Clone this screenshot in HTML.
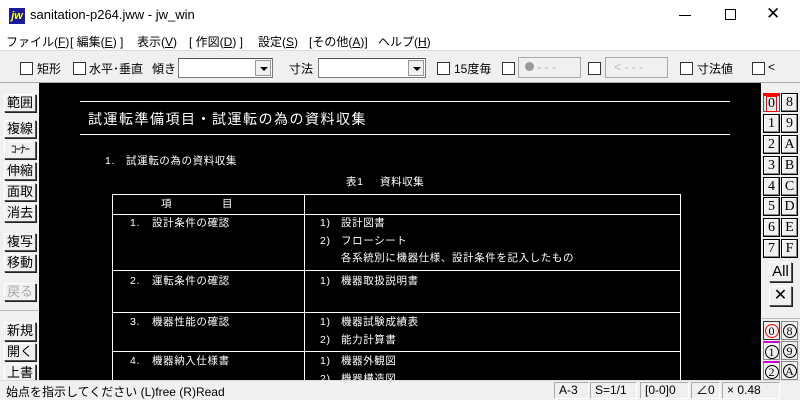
<!DOCTYPE html>
<html><head><meta charset="utf-8"><style>
*{margin:0;padding:0;box-sizing:border-box}
body{width:800px;height:400px;overflow:hidden;background:#f0f0f0;font-family:"Liberation Sans","Noto Sans CJK JP",sans-serif;position:relative;font-size:12px;color:#000}
.a{position:absolute;white-space:nowrap}
#title{left:0;top:0;width:800px;height:30px;background:#fff}
#menu{left:0;top:30px;width:800px;height:20px;background:#fff}
.cb{position:absolute;width:13px;height:13px;background:#fff;border:1px solid #333}
.dd{position:absolute;height:20px;background:#fff;border:1px solid #7a7a7a;border-top-color:#555}
.dd i{position:absolute;right:1px;top:1px;width:16px;height:16px;background:#f0f0f0;border:1px solid #999}
.dd i:after{content:"";position:absolute;left:4px;top:6px;border-left:4px solid transparent;border-right:4px solid transparent;border-top:4px solid #000}
.btn{position:absolute;background:#f0f0f0;border:1px solid;border-color:#fff #555 #555 #fff;box-shadow:1px 1px 0 #222;font-size:13px;text-align:center;line-height:16px}
#canvas{left:39px;top:83px;width:722px;height:297px;background:#000;overflow:hidden}
.w{position:absolute;color:#fff;font-size:10.5px;letter-spacing:0.6px;white-space:nowrap;line-height:12px}
.hl{position:absolute;background:#fff;height:1px}
.vl{position:absolute;background:#fff;width:1px}
.rb{position:absolute;width:17px;height:19px;background:#f0f0f0;border:1px solid #000;box-shadow:inset -1px -1px 0 #888,inset 1px 1px 0 #fff;font-family:"Liberation Serif","Noto Serif CJK SC",serif;font-size:14px;text-align:center;line-height:17px}
.cir{position:absolute;width:17px;height:19px;background:#f0f0f0;border:1px solid #888;font-size:14px;text-align:center;line-height:17px;font-family:"Liberation Serif",serif}
.cir span{display:inline-block;width:14px;height:14px;border:1px solid #000;border-radius:50%;line-height:12px;font-size:12px;margin-top:2px}
#status{left:0;top:380px;width:800px;height:20px;background:#f0f0f0;border-top:1px solid #ddd}
.sb{position:absolute;top:382px;height:17px;border:1px solid;border-color:#aaa #fff #fff #aaa;font-size:12px;line-height:15px;padding-left:4px}
</style></head><body>
<div id="title" class="a"></div>
<div class="a" style="left:9px;top:8px;width:16px;height:16px;background:#1a1a9a;color:#ff0;font:italic bold 11px 'Liberation Sans';line-height:16px;text-align:center">jw</div>
<div class="a" style="left:30px;top:7px;font-size:13px">sanitation-p264.jww - jw_win</div>
<div class="a" style="left:679px;top:15px;width:12px;height:1px;background:#000"></div>
<div class="a" style="left:725px;top:9px;width:11px;height:11px;border:1px solid #000"></div>
<div class="a" style="left:766px;top:4px;font-size:17px;font-weight:300">✕</div>
<div id="menu" class="a"></div>
<div class="a" style="left:6px;top:33px">ファイル(<u>F</u>)</div>
<div class="a" style="left:70px;top:33px">[ 編集(<u>E</u>) ]</div>
<div class="a" style="left:137px;top:33px">表示(<u>V</u>)</div>
<div class="a" style="left:189px;top:33px">[ 作図(<u>D</u>) ]</div>
<div class="a" style="left:258px;top:33px">設定(<u>S</u>)</div>
<div class="a" style="left:309px;top:33px">[その他(<u>A</u>)]</div>
<div class="a" style="left:378px;top:33px">ヘルプ(<u>H</u>)</div>
<div class="a" style="left:0;top:50px;width:800px;height:1px;background:#ddd"></div>

<div class="cb" style="left:20px;top:62px"></div><div class="a" style="left:37px;top:60px;font-size:12px">矩形</div>
<div class="cb" style="left:73px;top:62px"></div><div class="a" style="left:89px;top:60px">水平･垂直</div>
<div class="a" style="left:152px;top:60px">傾き</div>
<div class="dd" style="left:178px;top:58px;width:95px"><i></i></div>
<div class="a" style="left:289px;top:60px">寸法</div>
<div class="dd" style="left:318px;top:58px;width:108px"><i></i></div>
<div class="cb" style="left:437px;top:62px"></div><div class="a" style="left:454px;top:60px">15度毎</div>
<div class="cb" style="left:502px;top:62px"></div>
<div class="a" style="left:518px;top:57px;width:63px;height:21px;border:1px solid #aaa;background:#f0f0f0;color:#aaa;font-size:12px;line-height:19px;padding-left:6px"><span style="display:inline-block;width:9px;height:9px;border-radius:50%;background:#999"></span> - - -</div>
<div class="cb" style="left:588px;top:62px"></div>
<div class="a" style="left:605px;top:57px;width:63px;height:21px;border:1px solid #aaa;background:#f0f0f0;color:#bbb;font-size:12px;line-height:19px;padding-left:8px">&lt; - - -</div>
<div class="cb" style="left:680px;top:62px"></div><div class="a" style="left:697px;top:60px">寸法値</div>
<div class="cb" style="left:752px;top:62px"></div><div class="a" style="left:768px;top:60px">&lt;</div>
<div class="a" style="left:0;top:82px;width:800px;height:1px;background:#aaa"></div>

<div class="btn" style="left:4px;top:94px;width:32px;height:18px">範囲</div>
<div class="btn" style="left:4px;top:120px;width:32px;height:18px">複線</div>
<div class="btn" style="left:4px;top:141px;width:32px;height:18px;font-size:11px;letter-spacing:-1px">ｺｰﾅｰ</div>
<div class="btn" style="left:4px;top:162px;width:32px;height:18px">伸縮</div>
<div class="btn" style="left:4px;top:183px;width:32px;height:18px">面取</div>
<div class="btn" style="left:4px;top:204px;width:32px;height:18px">消去</div>
<div class="btn" style="left:4px;top:233px;width:32px;height:18px">複写</div>
<div class="btn" style="left:4px;top:254px;width:32px;height:18px">移動</div>
<div class="btn" style="left:4px;top:283px;width:32px;height:18px;color:#aaa">戻る</div>
<div class="a" style="left:0;top:310px;width:39px;height:1px;background:#bbb"></div>
<div class="btn" style="left:4px;top:322px;width:32px;height:19px">新規</div>
<div class="btn" style="left:4px;top:343px;width:32px;height:18px">開く</div>
<div class="btn" style="left:4px;top:364px;width:32px;height:18px">上書</div>

<div id="canvas" class="a">
<div class="hl" style="left:41px;top:18px;width:650px"></div>
<div class="a" style="left:49px;top:26px;color:#fff;font-size:14px;letter-spacing:1.5px">試運転準備項目・試運転の為の資料収集</div>
<div class="hl" style="left:41px;top:51px;width:650px"></div>
<div class="w" style="left:66px;top:72px">1.</div><div class="w" style="left:87px;top:72px">試運転の為の資料収集</div>
<div class="w" style="left:307px;top:93px">表1</div><div class="w" style="left:341px;top:93px">資料収集</div>
<div class="hl" style="left:73px;top:111px;width:568px"></div>
<div class="hl" style="left:73px;top:131px;width:568px"></div>
<div class="hl" style="left:73px;top:187px;width:568px"></div>
<div class="hl" style="left:73px;top:229px;width:568px"></div>
<div class="hl" style="left:73px;top:268px;width:568px"></div>
<div class="vl" style="left:73px;top:111px;height:190px"></div>
<div class="vl" style="left:265px;top:111px;height:190px"></div>
<div class="vl" style="left:641px;top:111px;height:190px"></div>
<div class="w" style="left:122px;top:115px">項</div><div class="w" style="left:183px;top:115px">目</div>
<div class="w" style="left:91px;top:134px">1.</div><div class="w" style="left:113px;top:134px">設計条件の確認</div>
<div class="w" style="left:281px;top:134px">1)</div><div class="w" style="left:302px;top:134px">設計図書</div>
<div class="w" style="left:281px;top:152px">2)</div><div class="w" style="left:302px;top:152px">フローシート</div>
<div class="w" style="left:302px;top:169px">各系統別に機器仕様、設計条件を記入したもの</div>
<div class="w" style="left:91px;top:192px">2.</div><div class="w" style="left:113px;top:192px">運転条件の確認</div>
<div class="w" style="left:281px;top:192px">1)</div><div class="w" style="left:302px;top:192px">機器取扱説明書</div>
<div class="w" style="left:91px;top:233px">3.</div><div class="w" style="left:113px;top:233px">機器性能の確認</div>
<div class="w" style="left:281px;top:233px">1)</div><div class="w" style="left:302px;top:233px">機器試験成績表</div>
<div class="w" style="left:281px;top:251px">2)</div><div class="w" style="left:302px;top:251px">能力計算書</div>
<div class="w" style="left:91px;top:272px">4.</div><div class="w" style="left:113px;top:272px">機器納入仕様書</div>
<div class="w" style="left:281px;top:272px">1)</div><div class="w" style="left:302px;top:272px">機器外観図</div>
<div class="w" style="left:281px;top:290px">2)</div><div class="w" style="left:302px;top:290px">機器構造図</div>
</div>

<div class="a" style="left:761px;top:83px;width:39px;height:297px;background:#f0f0f0"></div>
<div class="rb" style="left:763px;top:93px;border-color:#555;border-top:3px solid red;box-shadow:none;background:#e8e8e8"><span style="display:block;border:1px solid red;margin:0 2px;line-height:14px">0</span></div>
<div class="rb" style="left:781px;top:93px">8</div>
<div class="rb" style="left:763px;top:114px">1</div><div class="rb" style="left:781px;top:114px">9</div>
<div class="rb" style="left:763px;top:135px">2</div><div class="rb" style="left:781px;top:135px">A</div>
<div class="rb" style="left:763px;top:156px">3</div><div class="rb" style="left:781px;top:156px">B</div>
<div class="rb" style="left:763px;top:177px">4</div><div class="rb" style="left:781px;top:177px">C</div>
<div class="rb" style="left:763px;top:197px">5</div><div class="rb" style="left:781px;top:197px">D</div>
<div class="rb" style="left:763px;top:218px">6</div><div class="rb" style="left:781px;top:218px">E</div>
<div class="rb" style="left:763px;top:239px">7</div><div class="rb" style="left:781px;top:239px">F</div>
<div class="btn" style="left:769px;top:262px;width:23px;height:20px;font-size:15px;line-height:18px">All</div>
<div class="btn" style="left:769px;top:286px;width:23px;height:20px;font-size:16px;line-height:18px">✕</div>
<div class="a" style="left:761px;top:318px;width:39px;height:1px;background:#bbb"></div>
<div class="cir" style="left:763px;top:321px;border-color:#333"><span style="border-color:red">0</span></div>
<div class="cir" style="left:781px;top:321px"><span>8</span></div>
<div class="cir" style="left:763px;top:341px;border-top:2px solid #c0c"><span>1</span></div>
<div class="cir" style="left:781px;top:341px"><span>9</span></div>
<div class="cir" style="left:763px;top:361px;border-top:2px solid #c0c"><span>2</span></div>
<div class="cir" style="left:781px;top:361px"><span>A</span></div>

<div id="status" class="a"></div>
<div class="a" style="left:6px;top:383px;font-size:12px">始点を指示してください (L)free (R)Read</div>
<div class="sb" style="left:554px;width:35px">A-3</div>
<div class="sb" style="left:590px;width:47px">S=1/1</div>
<div class="sb" style="left:640px;width:49px">[0-0]0</div>
<div class="sb" style="left:691px;width:29px">∠0</div>
<div class="sb" style="left:722px;width:58px">× 0.48</div>
</body></html>
